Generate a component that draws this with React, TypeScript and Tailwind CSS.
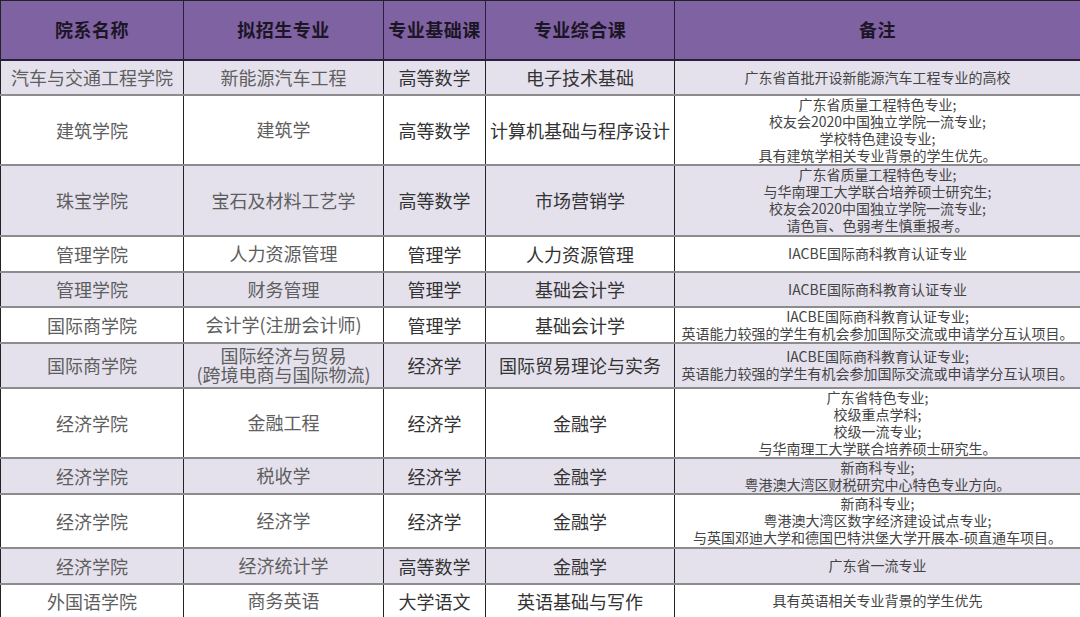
import React from "react";

type Row = {
  h: number;
  shade: boolean;
  a: string;
  b: string[];
  c: string;
  d: string;
  e: string[];
};

const rows: Row[] = [
  { h: 35, shade: true, a: "汽车与交通工程学院", b: ["新能源汽车工程"], c: "高等数学", d: "电子技术基础", e: ["广东省首批开设新能源汽车工程专业的高校"] },
  { h: 70, shade: false, a: "建筑学院", b: ["建筑学"], c: "高等数学", d: "计算机基础与程序设计", e: ["广东省质量工程特色专业;", "校友会2020中国独立学院一流专业;", "学校特色建设专业;", "具有建筑学相关专业背景的学生优先。"] },
  { h: 71, shade: true, a: "珠宝学院", b: ["宝石及材料工艺学"], c: "高等数学", d: "市场营销学", e: ["广东省质量工程特色专业;", "与华南理工大学联合培养硕士研究生;", "校友会2020中国独立学院一流专业;", "请色盲、色弱考生慎重报考。"] },
  { h: 36, shade: false, a: "管理学院", b: ["人力资源管理"], c: "管理学", d: "人力资源管理", e: ["IACBE国际商科教育认证专业"] },
  { h: 35, shade: true, a: "管理学院", b: ["财务管理"], c: "管理学", d: "基础会计学", e: ["IACBE国际商科教育认证专业"] },
  { h: 36, shade: false, a: "国际商学院", b: ["会计学(注册会计师)"], c: "管理学", d: "基础会计学", e: ["IACBE国际商科教育认证专业;", "英语能力较强的学生有机会参加国际交流或申请学分互认项目。"] },
  { h: 45, shade: true, a: "国际商学院", b: ["国际经济与贸易", "(跨境电商与国际物流)"], c: "经济学", d: "国际贸易理论与实务", e: ["IACBE国际商科教育认证专业;", "英语能力较强的学生有机会参加国际交流或申请学分互认项目。"] },
  { h: 70, shade: false, a: "经济学院", b: ["金融工程"], c: "经济学", d: "金融学", e: ["广东省特色专业;", "校级重点学科;", "校级一流专业;", "与华南理工大学联合培养硕士研究生。"] },
  { h: 36, shade: true, a: "经济学院", b: ["税收学"], c: "经济学", d: "金融学", e: ["新商科专业;", "粤港澳大湾区财税研究中心特色专业方向。"] },
  { h: 54, shade: false, a: "经济学院", b: ["经济学"], c: "经济学", d: "金融学", e: ["新商科专业;", "粤港澳大湾区数字经济建设试点专业;", "与英国邓迪大学和德国巴特洪堡大学开展本-硕直通车项目。"] },
  { h: 36, shade: true, a: "经济学院", b: ["经济统计学"], c: "高等数学", d: "金融学", e: ["广东省一流专业"] },
  { h: 34, shade: false, a: "外国语学院", b: ["商务英语"], c: "大学语文", d: "英语基础与写作", e: ["具有英语相关专业背景的学生优先"] },
];

const font = { fontFamily: '"Noto Sans CJK SC", "Noto Sans", sans-serif' };

export default function App() {
  return (
    <div className="w-[1080px] h-[617px] overflow-hidden bg-white" style={font}>
      <table className="w-[1080px] table-fixed border-collapse border border-[#222]">
        <colgroup>
          <col className="w-[183px]" />
          <col className="w-[200px]" />
          <col className="w-[102px]" />
          <col className="w-[189px]" />
          <col className="w-[406px]" />
        </colgroup>
        <thead>
          <tr className="h-[59px] bg-[#7e62a1]">
            {["院系名称", "拟招生专业", "专业基础课", "专业综合课", "备注"].map((t, i) => (
              <th
                key={i}
                className="border-r border-b-2 border-[#2a1f3a] p-0 text-center align-middle text-[18px] font-bold text-[#1c1526] whitespace-nowrap tracking-[0.5px]"
              >
                {t}
              </th>
            ))}
          </tr>
        </thead>
        <tbody>
          {rows.map((r, i) => (
            <tr key={i} className={r.shade ? "bg-[#e4e1ed]" : "bg-white"} style={{ height: r.h }}>
              <td className="border-r border-r-[#222] border-b-2 border-b-[#8c8c8c] p-0 text-center align-middle text-[18px] leading-[20px] text-[#5e5e5e] whitespace-nowrap">
                {r.a}
              </td>
              <td className="border-r border-r-[#222] border-b-2 border-b-[#8c8c8c] p-0 text-center align-middle text-[18px] leading-[19px] text-[#5e5e5e] whitespace-nowrap">
                {r.b.map((l, j) => (
                  <div key={j}>{l}</div>
                ))}
              </td>
              <td className="border-r border-r-[#222] border-b-2 border-b-[#8c8c8c] p-0 text-center align-middle text-[18px] leading-[20px] text-[#333] whitespace-nowrap">
                {r.c}
              </td>
              <td className="border-r border-r-[#222] border-b-2 border-b-[#8c8c8c] p-0 text-center align-middle text-[18px] leading-[20px] text-[#333] whitespace-nowrap">
                {r.d}
              </td>
              <td className="border-b-2 border-b-[#8c8c8c] p-0 text-center align-middle text-[14px] leading-[17px] text-[#444] whitespace-nowrap">
                {r.e.map((l, j) => (
                  <div key={j}>{l}</div>
                ))}
              </td>
            </tr>
          ))}
        </tbody>
      </table>
    </div>
  );
}
